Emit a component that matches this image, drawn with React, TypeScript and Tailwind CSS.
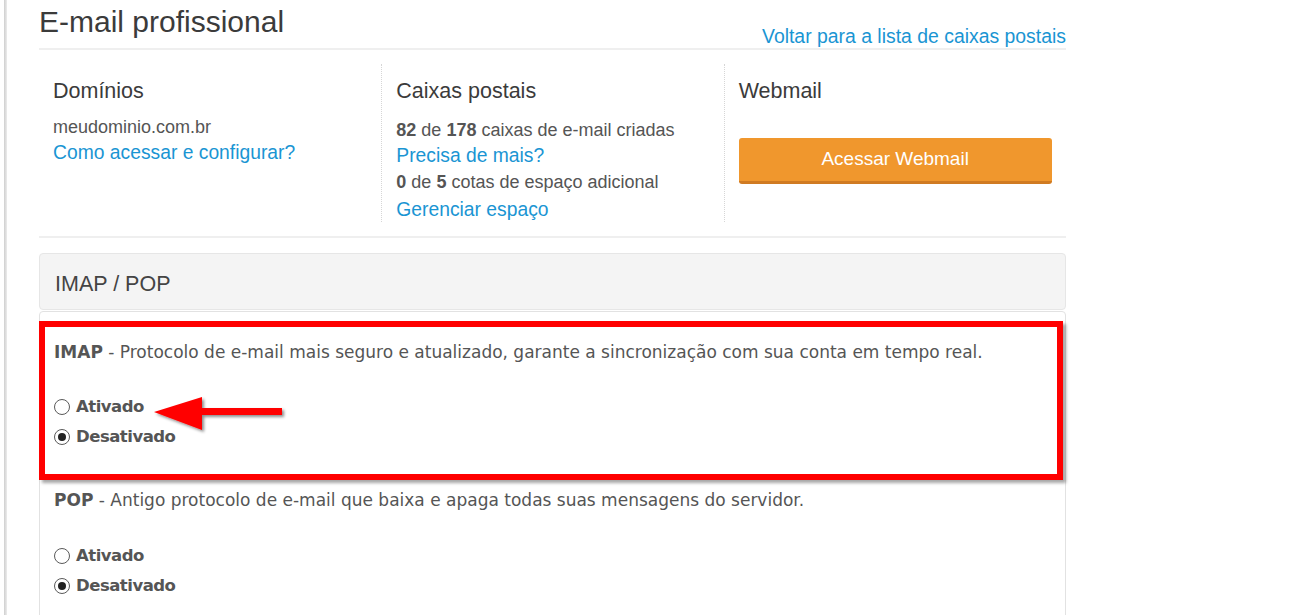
import { useState } from 'react';

const head = { fontFamily: '"Liberation Sans", Arial, sans-serif' };
const body = { fontFamily: '"DejaVu Sans", Verdana, sans-serif' };

const Radio = ({ checked, label, onClick }: { checked: boolean; label: string; onClick: () => void }) => (
  <label className="flex items-center gap-[6px] cursor-pointer h-[30px]" onClick={onClick}>
    <span className="w-[16px] h-[16px] rounded-full border border-[#5a5a5a] bg-white flex items-center justify-center">
      {checked && <span className="w-[8px] h-[8px] rounded-full bg-[#222]" />}
    </span>
    <span className="font-bold text-[16.5px] text-[#555] tracking-[-0.5px]">{label}</span>
  </label>
);

// seta vermelha de destaque (anotação)
const Arrow = () => (
  <svg width="140" height="44" viewBox="0 0 140 44" className="absolute left-[107px] top-[67px]">
    <defs>
      <filter id="sh" x="-10%" y="-20%" width="130%" height="160%">
        <feDropShadow dx="2" dy="2" stdDeviation="1.5" floodColor="#000" floodOpacity="0.45" />
      </filter>
    </defs>
    <path d="M2 18 L50 3 L50 14 L130 14 L130 21 L50 21 L50 36 Z" fill="#ff0000" filter="url(#sh)" />
  </svg>
);

const App = () => {
  const [imap, setImap] = useState(false);
  const [pop, setPop] = useState(false);

  return (
    <div className="flex min-h-[615px] bg-white text-[#555]" style={body}>
      <div className="w-[4px] shrink-0" />
      <div className="w-[3px] shrink-0 bg-gradient-to-r from-[#cfcfcf] to-[#ececec]" />
      <div className="w-[1027px] ml-[32px]">
        <div className="flex items-end justify-between h-[50px] border-b-2 border-[#efefef]">
          <h1 className="text-[30px] leading-none text-[#3b3b3b] pb-[11px]" style={head}>
            E-mail profissional
          </h1>
          <a className="text-[19.4px] leading-[16px] pb-[4px] text-[#1a95d3]" style={head}>
            Voltar para a lista de caixas postais
          </a>
        </div>

        <div className="grid grid-cols-3 pt-[14px] pb-[14px] border-b-2 border-[#efefef]" style={head}>
          <div className="pl-[14px] pt-[14px] h-[158px]">
            <h2 className="text-[21.5px] leading-[26px] text-[#3b3b3b]">Domínios</h2>
            <p className="text-[18px] text-[#555] mt-[13px] leading-[20px]">meudominio.com.br</p>
            <a className="block text-[19.3px] text-[#1a95d3] leading-[24px] mt-[4px]">Como acessar e configurar?</a>
          </div>
          <div className="pl-[14px] pt-[14px] border-l border-dotted border-[#d6d6d6]">
            <h2 className="text-[21.5px] leading-[26px] text-[#3b3b3b]">Caixas postais</h2>
            <p className="text-[18px] mt-[16px] leading-[20px]">
              <b>82</b> de <b>178</b> caixas de e-mail criadas
            </p>
            <a className="block text-[19.3px] text-[#1a95d3] leading-[24px] mt-[4px]">Precisa de mais?</a>
            <p className="text-[18px] leading-[20px] mt-[4px]">
              <b>0</b> de <b>5</b> cotas de espaço adicional
            </p>
            <a className="block text-[19.3px] text-[#1a95d3] leading-[24px] mt-[6px]">Gerenciar espaço</a>
          </div>
          <div className="pl-[14px] pt-[14px] border-l border-dotted border-[#d6d6d6]">
            <h2 className="text-[21.5px] leading-[26px] text-[#3b3b3b]">Webmail</h2>
            <button className="mt-[34px] w-[313px] h-[46px] rounded-[3px] bg-[#f0972d] border-b-[3px] border-[#d07b22] text-white text-[19px]">
              Acessar Webmail
            </button>
          </div>
        </div>

        <div className="mt-[15px] h-[57px] bg-[#f4f4f4] border border-[#e6e6e6] rounded-[4px] flex items-center pl-[15px] pt-[5px]">
          <span className="text-[21.5px] text-[#444]" style={head}>IMAP / POP</span>
        </div>

        <div className="mt-[1px] border border-[#e2e2e2] rounded-t-[4px] pt-[9px] min-h-[310px]">
          <div className="relative -ml-[1px] w-[1024px] border-[6px] border-[#ff0000] shadow-[3px_3px_3px_rgba(0,0,0,0.35)] pl-[9px] pt-[15px] h-[159px]">
            <p className="text-[17px] leading-[20px]">
              <b>IMAP</b> - Protocolo de e-mail mais seguro e atualizado, garante a sincronização com sua conta em tempo real.
            </p>
            <div className="mt-[30px]">
              <Radio checked={imap} label="Ativado" onClick={() => setImap(true)} />
              <Radio checked={!imap} label="Desativado" onClick={() => setImap(false)} />
            </div>
            <Arrow />
          </div>

          <div className="pl-[14px] pt-[10px]">
            <p className="text-[17px] leading-[20px]">
              <b>POP</b> - Antigo protocolo de e-mail que baixa e apaga todas suas mensagens do servidor.
            </p>
            <div className="mt-[31px]">
              <Radio checked={pop} label="Ativado" onClick={() => setPop(true)} />
              <Radio checked={!pop} label="Desativado" onClick={() => setPop(false)} />
            </div>
          </div>
        </div>
      </div>
    </div>
  );
};

export default App;
